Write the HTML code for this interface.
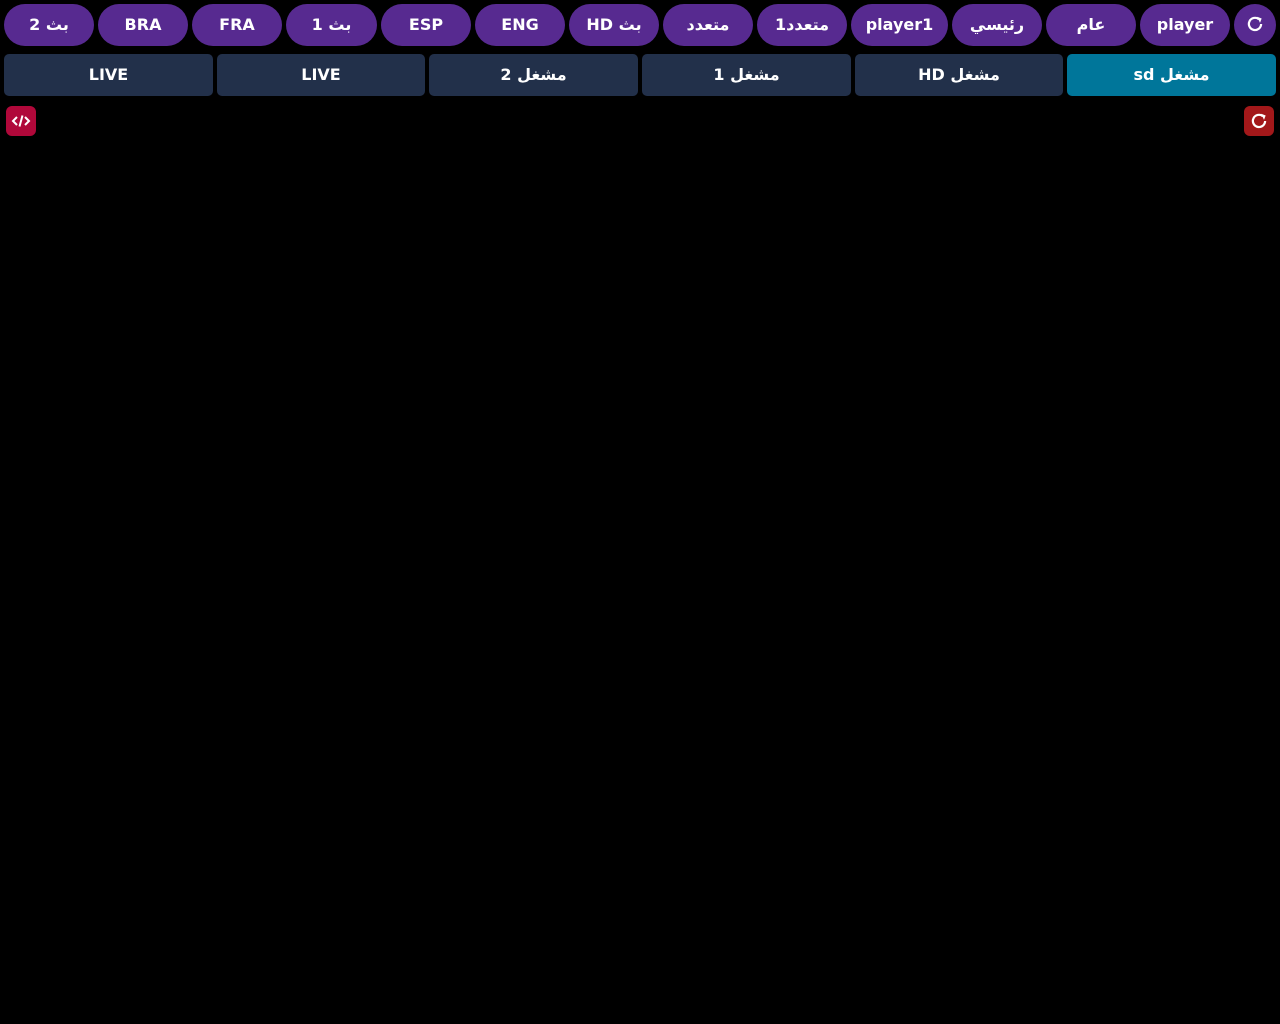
<!DOCTYPE html>
<html><head><meta charset="utf-8"><style>
body{margin:0;background:#000;width:1280px;height:1024px;overflow:hidden;font-family:"DejaVu Sans","Liberation Sans",sans-serif;font-weight:bold;color:#fff}
.p{position:absolute;top:4px;height:42px;box-sizing:border-box;padding-bottom:2px;border-radius:21px;background:#572a90;display:flex;align-items:center;justify-content:center;font-size:16px}
.b{position:absolute;top:54px;height:42px;box-sizing:border-box;padding-bottom:2px;border-radius:5px;background:#22304a;display:flex;align-items:center;justify-content:center;font-size:16px}
.s{position:absolute;top:106px;width:30px;height:30px;border-radius:6px;display:flex;align-items:center;justify-content:center}
</style></head><body>
<div class="p" style="left:1234px;width:42px"><svg width="20" height="20" viewBox="0 0 18 18"><path d="M14.5 9a5.5 5.5 0 1 1-2-4.3" fill="none" stroke="#fff" stroke-width="2"/><path d="M11 2.5l4 1.5-1.5 4z" fill="#fff"/></svg></div>
<div class="p" style="left:1140px;width:90px">player</div>
<div class="p" style="left:1046px;width:90px">عام</div>
<div class="p" style="left:952px;width:90px">رئيسي</div>
<div class="p" style="left:851px;width:97px">player1</div>
<div class="p" style="left:757px;width:90px">متعدد1</div>
<div class="p" style="left:663px;width:90px">متعدد</div>
<div class="p" style="left:569px;width:90px" dir="rtl">بث HD</div>
<div class="p" style="left:475px;width:90px">ENG</div>
<div class="p" style="left:381px;width:90px">ESP</div>
<div class="p" style="left:286px;width:91px" dir="rtl">بث 1</div>
<div class="p" style="left:192px;width:90px">FRA</div>
<div class="p" style="left:98px;width:90px">BRA</div>
<div class="p" style="left:4px;width:90px" dir="rtl">بث 2</div>
<div class="b" style="left:1067px;width:209px;background:#00769a" dir="rtl">مشغل sd</div>
<div class="b" style="left:855px;width:208px" dir="rtl">مشغل HD</div>
<div class="b" style="left:642px;width:209px" dir="rtl">مشغل 1</div>
<div class="b" style="left:429px;width:209px" dir="rtl">مشغل 2</div>
<div class="b" style="left:217px;width:208px">LIVE</div>
<div class="b" style="left:4px;width:209px">LIVE</div>
<div class="s" style="left:1244px;background:#a3181a"><svg width="20" height="20" viewBox="0 0 18 18"><path d="M14.5 9a5.5 5.5 0 1 1-2-4.3" fill="none" stroke="#fff" stroke-width="2"/><path d="M11 2.5l4 1.5-1.5 4z" fill="#fff"/></svg></div>
<div class="s" style="left:6px;background:#b0083a"><svg width="20" height="16" viewBox="0 0 20 16"><path d="M6 4L2 8l4 4M14 4l4 4-4 4M11.5 2.5l-3 11" fill="none" stroke="#fff" stroke-width="2"/></svg></div>
</body></html>
